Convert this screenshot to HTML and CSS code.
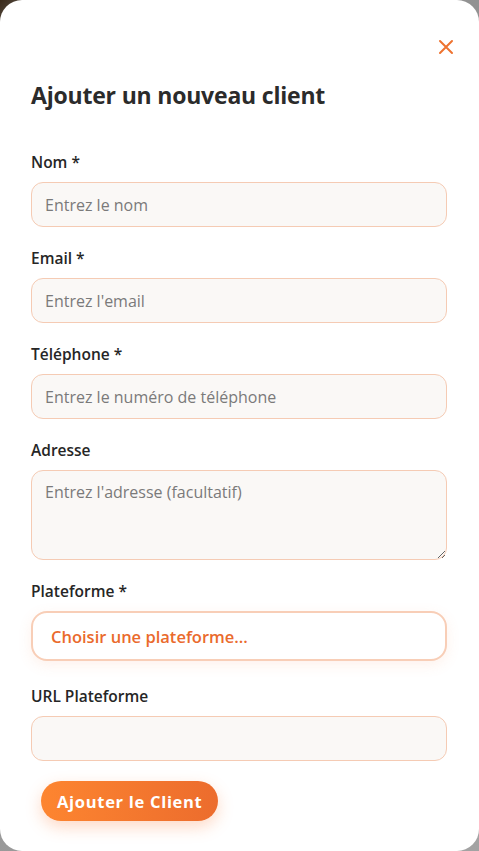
FILE: index.html
```html
<!DOCTYPE html>
<html lang="fr">
<head>
<meta charset="utf-8">
<title>Ajouter un nouveau client</title>
<link rel="stylesheet" href="styles.css">
</head>
<body>
<div class="modal">
  <div class="modal-head">
    <button class="close" aria-label="Fermer">
      <svg width="16" height="16" viewBox="0 0 16 16"><path d="M2 2L14 14M14 2L2 14" stroke="#ee7330" stroke-width="2" stroke-linecap="round" fill="none"/></svg>
    </button>
  </div>
  <h2 class="title">Ajouter un nouveau client</h2>
  <form class="form">
    <div class="group">
      <label class="label">Nom *</label>
      <input class="field" type="text" placeholder="Entrez le nom">
    </div>
    <div class="group">
      <label class="label">Email *</label>
      <input class="field" type="email" placeholder="Entrez l'email">
    </div>
    <div class="group">
      <label class="label">Téléphone *</label>
      <input class="field" type="tel" placeholder="Entrez le numéro de téléphone">
    </div>
    <div class="group">
      <label class="label">Adresse</label>
      <textarea class="field area" placeholder="Entrez l'adresse (facultatif)"></textarea>
    </div>
    <div class="group group-select">
      <label class="label">Plateforme *</label>
      <div class="select">Choisir une plateforme...</div>
    </div>
    <div class="group">
      <label class="label">URL Plateforme</label>
      <input class="field" type="url">
    </div>
    <button class="submit" type="button">Ajouter le Client</button>
  </form>
</div>
</body>
</html>
```

FILE: styles.css
```css
html, body {
  margin: 0;
  padding: 0;
}
body {
  width: 479px;
  height: 851px;
  background: linear-gradient(135deg, #3a2a1a 0%, #8a8a8a 6%, #a3a3a3 100%);
  font-family: "Open Sans", "Noto Sans", sans-serif;
  overflow: hidden;
}
.modal {
  box-sizing: border-box;
  width: 479px;
  height: 851px;
  background: #ffffff;
  border-radius: 22px;
  padding: 0 32px 0 31px;
}
.modal-head {
  display: flex;
  justify-content: flex-end;
  padding-top: 38px;
  margin-right: -8px;
}
.close {
  border: 0;
  background: none;
  padding: 0;
  width: 18px;
  height: 18px;
  display: flex;
  align-items: center;
  justify-content: center;
  cursor: pointer;
}
.title {
  margin: 24px 0 0;
  font-size: 23px;
  line-height: 30px;
  font-weight: 700;
  color: #2b2b2b;
  letter-spacing: -0.2px;
}
.form {
  display: flex;
  flex-direction: column;
  margin-top: 40px;
}
.group {
  display: flex;
  flex-direction: column;
  margin-bottom: 19px;
}
.group-select {
  margin-bottom: 23px;
}
.label {
  font-size: 15.5px;
  line-height: 24px;
  font-weight: 600;
  color: #262626;
  margin-bottom: 8px;
}
.field {
  box-sizing: border-box;
  width: 100%;
  height: 45px;
  border: 1px solid #f5cbb4;
  border-radius: 12px;
  background: #faf8f6;
  padding: 0 13px;
  font-family: inherit;
  font-size: 16px;
  color: #333;
  outline: none;
}
.field::placeholder {
  color: #7a7a7a;
}
.area {
  height: 90px;
  padding-top: 10px;
  resize: vertical;
  line-height: 22px;
}
.select {
  box-sizing: border-box;
  height: 50px;
  flex: 0 0 50px;
  border: 2px solid #f8ceb7;
  border-radius: 16px;
  background: #ffffff;
  padding: 0 18px;
  display: flex;
  align-items: center;
  font-size: 16.5px;
  font-weight: 600;
  color: #ea6a2c;
  box-shadow: 0 4px 14px rgba(245, 140, 90, 0.12);
}
.submit {
  align-self: flex-start;
  margin: 1px 0 0 10px;
  height: 40px;
  padding: 0 16px;
  border: 0;
  border-radius: 20px;
  background: linear-gradient(90deg, #fd8530 0%, #ec6c2d 100%);
  color: #ffffff;
  font-family: inherit;
  font-size: 16.5px;
  font-weight: 700;
  letter-spacing: 0.7px;
  box-shadow: 0 6px 16px rgba(250, 120, 50, 0.28);
  cursor: pointer;
}
```
